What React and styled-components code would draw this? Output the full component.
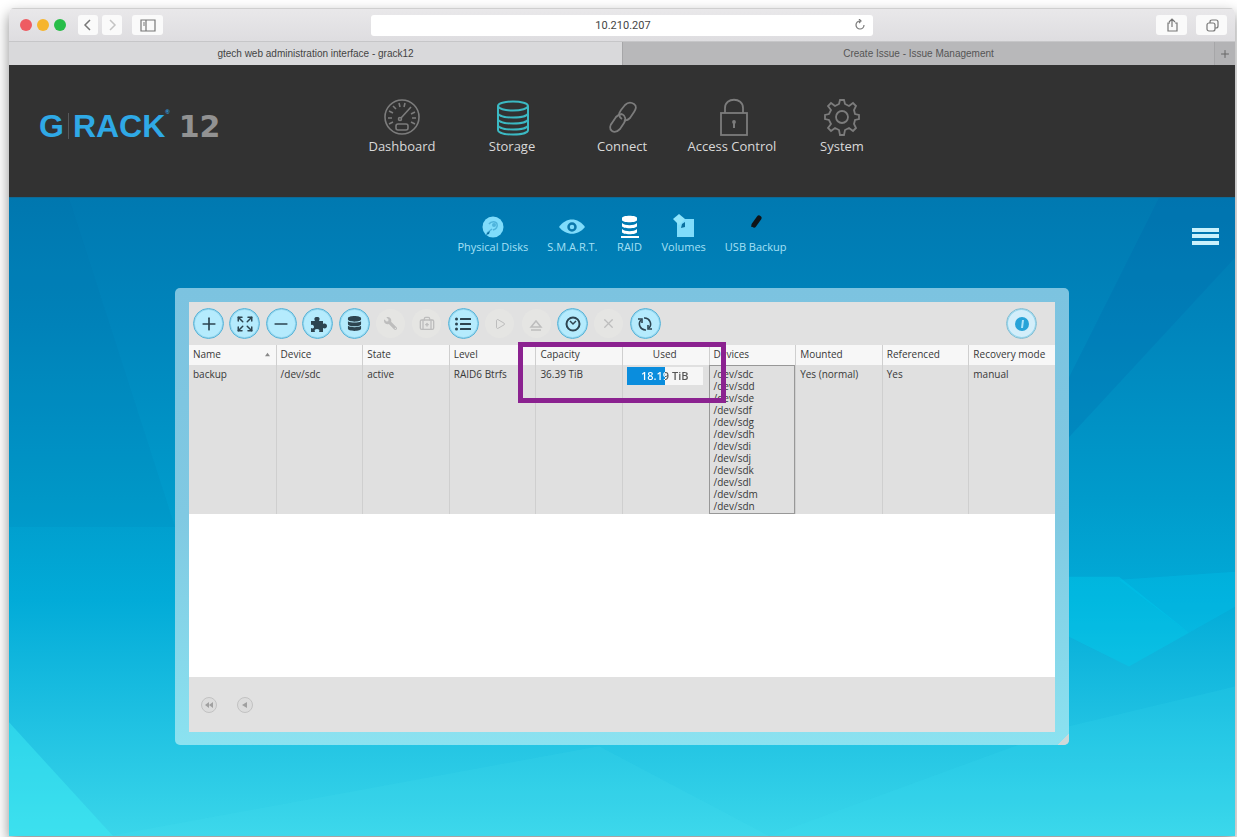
import React from 'react'
import styled, { createGlobalStyle, css } from 'styled-components'
import { Expand, BriefcaseMedical, Minus, Plus, X, Play } from 'lucide-react'
import { FaDatabase, FaWrench, FaListUl } from 'react-icons/fa'


const GlobalStyle = createGlobalStyle`
  * {
    box-sizing: border-box;
  }
  body {
    margin: 0;
    background: #fff;
    font-family: 'Open Sans', 'Noto Sans', sans-serif;
  }
  button {
    padding: 0;
    border: none;
    font: inherit;
    cursor: pointer;
  }
  a {
    text-decoration: none;
  }
`

const Page = styled.div`
  min-height: 100vh;
  display: flex;
  padding: 8px 2px 1px 9px;
  overflow: hidden;
`

const BrowserWindow = styled.div`
  flex: 1;
  display: flex;
  flex-direction: column;
  border-radius: 5px 5px 0 0;
  box-shadow: 0 6px 14px rgba(0, 0, 0, 0.45);
  overflow: hidden;
`

const BrowserBar = styled.div`
  height: 34px;
  display: grid;
  grid-template-columns: 1fr 41% 1fr;
  align-items: center;
  background: linear-gradient(#e9e8ea, #dedde0);
  border-top: 1px solid #cfcfcf;
  border-bottom: 1px solid #c6c6c8;
`

const BarGroup = styled.div`
  display: flex;
  align-items: center;
  justify-content: ${(p) => (p.$end ? 'flex-end' : 'flex-start')};
  gap: ${(p) => (p.$end ? '9px' : '4px')};
  padding: 0 8px 0 11px;
`

const Lights = styled.div`
  display: flex;
  gap: 5px;
  margin-right: 8px;
`

const Light = styled.span`
  width: 12px;
  height: 12px;
  border-radius: 50%;
  background: ${(p) => p.$color};
`

const BarButton = styled.button`
  width: ${(p) => (p.$wide ? '31px' : '20px')};
  height: 20px;
  margin-left: ${(p) => (p.$apart ? '6px' : '0')};
  display: flex;
  align-items: center;
  justify-content: center;
  border-radius: 3px;
  background: #fafafa;
  color: ${(p) => (p.$dim ? '#c4c4c4' : '#777')};
`

const AddressField = styled.div`
  height: 21px;
  display: flex;
  align-items: center;
  padding: 0 7px 0 21px;
  border-radius: 3px;
  background: #fff;
  input {
    flex: 1;
    min-width: 0;
    border: none;
    outline: none;
    background: none;
    text-align: center;
    color: #444;
    font: 11px Roboto, sans-serif;
  }
  button {
    display: flex;
    background: none;
    color: #777;
  }
`

const TabBar = styled.div`
  height: 23px;
  display: flex;
`

const Tab = styled.a`
  flex: ${(p) => (p.$active ? '0 0 50%' : '1')};
  display: flex;
  align-items: center;
  justify-content: center;
  background: ${(p) => (p.$active ? '#d9d9db' : '#b8b8ba')};
  border-left: ${(p) => (p.$active ? 'none' : '1px solid #a6a6a8')};
  color: ${(p) => (p.$active ? '#444' : '#555')};
  font: 10px 'Liberation Sans', Arial, sans-serif;
`

const NewTab = styled.button`
  width: 21px;
  background: #b3b3b5;
  border-left: 1px solid #a6a6a8;
  color: #666;
  display: flex;
  align-items: center;
  justify-content: center;
`

const Header = styled.header`
  height: 132px;
  display: grid;
  grid-template-columns: 1fr auto 1fr;
  background: #323232;
`

const Logo = styled.a`
  display: flex;
  align-items: center;
  height: 34px;
  margin: 44px 0 0 30px;
  color: #2fa9e6;
  font: bold 32px 'Liberation Sans', Arial, sans-serif;
  i {
    width: 1px;
    height: 26px;
    margin: 0 4px;
    background: #55585a;
  }
  sup {
    align-self: flex-start;
    font-size: 6px;
  }
  b {
    margin-left: 9px;
    color: #929292;
    font: bold 30px 'DejaVu Sans', sans-serif;
  }
`

const MainNav = styled.nav`
  display: flex;
  padding-top: 33px;
`

const MainLink = styled.a`
  width: 110px;
  display: flex;
  flex-direction: column;
  align-items: center;
  color: ${(p) => (p.$active ? '#3bb9c3' : '#7c7c7c')};
  span {
    color: #d9d9d9;
    font-size: 13px;
    line-height: 20px;
    white-space: nowrap;
  }
`

const Stage = styled.main`
  position: relative;
  flex: 1;
  border-top: 1px solid #0d6a97;
  background: linear-gradient(#0079b1 0%, #0085bc 20%, #009bcb 47%, #02abd8 63%, #1fc1e2 82%, #3ad6ea 100%);
`

const Facets = styled.svg`
  position: absolute;
  inset: 0;
  width: 100%;
  height: 100%;
`

const StageContent = styled.div`
  position: relative;
  padding: 15px 166px 0;
`

const SubNav = styled.nav`
  display: flex;
  justify-content: center;
  gap: 19px;
`

const SubLink = styled.a`
  display: flex;
  flex-direction: column;
  align-items: center;
  color: ${(p) => (p.$active ? '#fff' : '#7fdcfb')};
  span {
    color: #a5e0f5;
    font-size: 11px;
    line-height: 16px;
  }
`

const MenuButton = styled.button`
  position: absolute;
  top: 30px;
  right: 16px;
  display: flex;
  background: none;
`

const Panel = styled.section`
  position: relative;
  margin-top: 33px;
  padding: 14px 14px 13px;
  border-radius: 5px;
  background: linear-gradient(#7cc3e0, #80c9e2 50%, #8be2f0);
  overflow: hidden;
`

const ResizeCorner = styled.div`
  position: absolute;
  right: 0;
  bottom: 0;
  width: 12px;
  height: 12px;
  background: linear-gradient(135deg, transparent 50%, #cfd8d8 50%);
`

const Toolbar = styled.div`
  height: 43px;
  display: flex;
  align-items: center;
  justify-content: space-between;
  padding: 0 18px 0 4px;
  background: #e1e1e1;
`

const ToolGroup = styled.div`
  width: 468px;
  display: flex;
  justify-content: space-between;
`

const ToolButton = styled.button`
  width: 31px;
  height: 31px;
  display: flex;
  align-items: center;
  justify-content: center;
  border: 1px solid #58b2d6;
  border-radius: 50%;
  background: #b5ebfd;
  box-shadow: inset 0 0 0 1px #94d6ee;
  color: #2d4450;
  ${(p) => p.$pale && css`
    background: #d3eefa;
    border-color: #86bdd0;
  `}
  &:disabled {
    border-color: transparent;
    background: #e5e5e3;
    background-clip: content-box;
    box-shadow: none;
    color: #bdbdbd;
    cursor: default;
  }
`

const GridBody = styled.div`
  position: relative;
  min-height: 332px;
  background: #fff;
`

const Table = styled.table`
  width: 100%;
  table-layout: fixed;
  border-collapse: separate;
  border-spacing: 0;
  color: #383838;
  font-size: 10px;
  line-height: 12px;
  th, td {
    padding: 3px 0 2px 4px;
    border-left: 1px solid #cfcfcf;
    font-weight: 400;
    text-align: left;
    vertical-align: top;
    white-space: nowrap;
  }
  th:first-child, td:first-child {
    border-left: none;
  }
  th {
    height: 20px;
    background: #f7f7f7;
  }
  td {
    background: #e0e0e0;
  }
`

const HeadLabel = styled.div`
  display: flex;
  align-items: center;
  justify-content: ${(p) => (p.$center ? 'center' : 'space-between')};
  padding-right: 6px;
`

const DeviceCell = styled.td`
  && {
    border: 1px solid #989898;
    padding: 2px 0 1px 4px;
  }
  ul {
    margin: 0;
    padding: 0;
    list-style: none;
  }
`

const UsageCell = styled.td`
  && {
    padding: 2px 6px 0 4px;
  }
`

const UsageBar = styled.div`
  height: 18px;
  background: linear-gradient(90deg, #0a8ddd var(--used), #f6f6f6 var(--used));
  span {
    display: block;
    background: linear-gradient(90deg, #fff var(--used), #555 var(--used));
    background-clip: text;
    color: transparent;
    font-size: 11px;
    font-weight: 600;
    line-height: 18px;
    text-align: center;
  }
`

const Highlight = styled.div`
  position: absolute;
  top: -3px;
  left: 38%;
  width: 24%;
  height: 61px;
  border: 5px solid #8b2290;
  pointer-events: none;
`

const Pager = styled.footer`
  height: 55px;
  display: flex;
  align-items: center;
  gap: 20px;
  padding: 0 0 0 12px;
  background: #e1e1e1;
`

const PageButton = styled.button`
  width: 16px;
  height: 16px;
  display: flex;
  align-items: center;
  justify-content: center;
  border-radius: 50%;
  border: 1px solid #c2c2c2;
  background: #dcdcdc;
  color: #a0a0a0;
`

const Icon = ({ size = 38, box = 38, width = 2, children }) => (
  <svg width={size} height={size} viewBox={`0 0 ${box} ${box}`} fill="none" stroke="currentColor" strokeWidth={width} aria-hidden="true">
    {children}
  </svg>
)

const GaugeIcon = () => (
  <Icon width={1.6}>
    <circle cx="19" cy="19" r="17" />
    <path d="M5 20h4M6 13l4 2M10 8l3 3M16 5l1 4M22 5l-1 4M29 20h4M32 14l-4 2M6 26l4-2M32 26l-4-2" />
    <path d="M28 9L18 20" />
    <circle cx="17" cy="21" r="1.500" />
    <rect x="13" y="26" width="12" height="6" rx="2" />
  </Icon>
)

const StackIcon = () => (
  <Icon width={2}>
    <ellipse cx="20" cy="8" rx="15" ry="4.500" />
    <path d="M5 8v24c0 6 30 6 30 0V8M5 15c0 6 30 6 30 0M5 21c0 6 30 6 30 0M5 27c0 6 30 6 30 0" />
  </Icon>
)

const LinkIcon = () => (
  <Icon width={1.8}>
    <path d="M19 21c-3-2-4-5-1-9l4-5c3-3 6-3 9-1s2 5 0 8l-4 6c-2 2-4 3-6 2" />
    <path d="M19 16c4 2 4 6 2 9l-4 6c-3 3-5 4-8 2s-2-6 0-8l4-6c2-2 4-3 6-3" />
  </Icon>
)

const LockIcon = () => (
  <Icon width={1.8}>
    <rect x="8" y="15" width="26" height="22" />
    <path d="M12 15V10c0-11 18-11 18 0v5" />
    <path d="M21 23v7" strokeWidth="2" />
    <circle cx="21" cy="24" r="1" />
  </Icon>
)

const GearIcon = () => (
  <Icon width={1.8}>
    <circle cx="19" cy="19" r="6" />
    <path d="M16 6l1-4h4l1 4 4 2 4-3 3 3-2 4 1 4 4 1v4l-4 1-1 4 2 4-3 3-4-3-4 2-1 5h-4l-1-5-4-2-4 3-3-3 3-4-2-4-4-1v-4l4-1 2-4-3-4 3-3 4 3z" />
  </Icon>
)

const DiskIcon = () => (
  <Icon size={26} box={26}>
    <circle cx="13" cy="14" r="10.500" fill="currentColor" stroke="none" />
    <path d="M7 20l5-4M9 11c2-3 7-3 8 0s-1 5-4 6" stroke="#4fb4dc" strokeWidth="1.500" />
    <circle cx="14" cy="12" r="2" fill="#4fb4dc" stroke="none" />
    <path d="M6 22l3-1 1-3-3 2z" fill="#0a6fa0" stroke="none" />
  </Icon>
)

const EyeIcon = () => (
  <Icon size={26} box={26}>
    <path d="M0 14C7 4 19 4 26 14C19 23 7 23 0 14z" fill="currentColor" stroke="none" />
    <circle cx="13" cy="14" r="3.500" stroke="#0b78ab" strokeWidth="2.500" />
  </Icon>
)

const RaidIcon = () => (
  <Icon size={26} box={26}>
    <g fill="currentColor" stroke="none">
      <path d="M5 5c0-3 15-3 15 0v2c0 3-15 3-15 0z" />
      <path d="M5 10c3 3 12 3 15 0v3c0 3-15 3-15 0z" />
      <path d="M5 16c3 3 12 3 15 0v3c0 3-15 3-15 0z" />
      <rect x="4" y="23" width="18" height="2" />
    </g>
  </Icon>
)

const VolumesIcon = () => (
  <Icon size={26} box={26}>
    <rect x="6" y="6" width="17" height="18" fill="currentColor" stroke="none" />
    <path d="M8 1l6 5-6 6-6-6z" fill="#8fe4fb" stroke="none" />
    <path d="M14 9v5l-4 1 1-4z" fill="#0b6f9f" stroke="none" />
  </Icon>
)

const UsbIcon = () => (
  <Icon size={26} box={26}>
    <path d="M11 12l5-7" stroke="#101418" strokeWidth="5" strokeLinecap="round" />
    <path d="M8 14l2-4 3 3z" fill="#101418" stroke="none" />
  </Icon>
)

const PuzzleIcon = () => (
  <Icon size={18} box={18}>
    <path
      d="M2 6h4c-1-2-1-4 2-4s3 2 2 4h4v3c2-1 4 0 4 2s-2 3-4 2v4h-4c1-2 0-3-2-3s-3 1-2 3H2v-4c2 1 3 0 3-1s-1-3-3-2z"
      fill="currentColor"
      stroke="none"
    />
  </Icon>
)

const EjectIcon = () => (
  <Icon size={16} box={16}>
    <path d="M3 11l5-6 5 6zM3 14h10" strokeWidth="1.500" />
  </Icon>
)

const ClockIcon = () => (
  <Icon size={18} box={18}>
    <circle cx="9" cy="9" r="6.500" strokeWidth="2" />
    <path d="M6 6l3 3 3-3" strokeWidth="1.500" />
  </Icon>
)

const RefreshIcon = () => (
  <Icon size={18} box={18} width={1.6}>
    <path d="M5 5a6 6 0 0 0 5 10M13 13a6 6 0 0 0-5-10" />
    <path d="M2 4h4v4M16 14h-4v-4" />
  </Icon>
)

const InfoIcon = () => (
  <Icon size={18} box={18}>
    <circle cx="9" cy="9" r="7" fill="#27a3d8" stroke="none" />
    <path d="M10 5l-1 8" stroke="#a9e3fa" />
  </Icon>
)

const mainLinks = [
  { label: 'Dashboard', icon: <GaugeIcon /> },
  { label: 'Storage', icon: <StackIcon />, active: true },
  { label: 'Connect', icon: <LinkIcon /> },
  { label: 'Access Control', icon: <LockIcon /> },
  { label: 'System', icon: <GearIcon /> },
]

const subLinks = [
  { label: 'Physical Disks', icon: <DiskIcon /> },
  { label: 'S.M.A.R.T.', icon: <EyeIcon /> },
  { label: 'RAID', icon: <RaidIcon />, active: true },
  { label: 'Volumes', icon: <VolumesIcon /> },
  { label: 'USB Backup', icon: <UsbIcon /> },
]

const tools = [
  { name: 'Create', icon: <Plus size={20} /> },
  { name: 'Grow', icon: <Expand size={18} /> },
  { name: 'Remove', icon: <Minus size={20} /> },
  { name: 'Recover', icon: <PuzzleIcon /> },
  { name: 'File system', icon: <FaDatabase size={15} /> },
  { name: 'Repair', icon: <FaWrench size={13} style={{ transform: 'scaleX(-1)' }} />, disabled: true },
  { name: 'Rescue', icon: <BriefcaseMedical size={16} />, disabled: true },
  { name: 'Details', icon: <FaListUl size={16} /> },
  { name: 'Mount', icon: <Play size={12} />, disabled: true },
  { name: 'Unmount', icon: <EjectIcon />, disabled: true },
  { name: 'Scrub', icon: <ClockIcon /> },
  { name: 'Cancel', icon: <X size={15} />, disabled: true },
  { name: 'Refresh', icon: <RefreshIcon /> },
]

const columns = ['Name', 'Device', 'State', 'Level', 'Capacity', 'Used', 'Devices', 'Mounted', 'Referenced', 'Recovery mode']

const arrays = [
  {
    name: 'backup',
    device: '/dev/sdc',
    state: 'active',
    level: 'RAID6 Btrfs',
    capacity: '36.39 TiB',
    used: '18.19 TiB',
    percent: 50,
    devices: ['c', 'd', 'e', 'f', 'g', 'h', 'i', 'j', 'k', 'l', 'm', 'n'].map((d) => '/dev/sd' + d),
    mounted: 'Yes (normal)',
    referenced: 'Yes',
    recovery: 'manual',
  },
]

const Browser = () => (
  <>
    <BrowserBar>
      <BarGroup>
        <Lights>
          <Light $color="#ee5c62" />
          <Light $color="#f6b52e" />
          <Light $color="#27bd48" />
        </Lights>
        <BarButton aria-label="Back">
          <Icon size={12} box={12} width={1.5}><path d="M8 1L3 6l5 5" /></Icon>
        </BarButton>
        <BarButton $dim aria-label="Forward">
          <Icon size={12} box={12} width={1.5}><path d="M4 1l5 5-5 5" /></Icon>
        </BarButton>
        <BarButton $wide $apart aria-label="Sidebar">
          <Icon size={16} box={16} width={1.2}><path d="M1 3h14v11H1zM6 3v11M3 6h2M3 8h2" /></Icon>
        </BarButton>
      </BarGroup>
      <AddressField>
        <input type="text" aria-label="Address" defaultValue="10.210.207" />
        <button aria-label="Reload">
          <Icon size={12} box={12} width={1.2}><path d="M10 6a4 4 0 1 1-4-4M5 0l2 2-2 2" /></Icon>
        </button>
      </AddressField>
      <BarGroup $end>
        <BarButton $wide aria-label="Share">
          <Icon size={16} box={16} width={1.2}><path d="M6 6H4v8h9V6h-2M8 10V2M5 5l3-3 3 3" /></Icon>
        </BarButton>
        <BarButton $wide aria-label="Show tabs">
          <Icon size={16} box={16} width={1.2}>
            <rect x="3" y="6" width="8" height="8" rx="2" />
            <path d="M6 6V5q0-2 2-2h4q2 0 2 2v4q0 2-2 2h-1" />
          </Icon>
        </BarButton>
      </BarGroup>
    </BrowserBar>
    <TabBar>
      <Tab href="#grack" $active>gtech web administration interface - grack12</Tab>
      <Tab href="#issue">Create Issue - Issue Management</Tab>
      <NewTab aria-label="New tab"><Plus size={12} /></NewTab>
    </TabBar>
  </>
)

const Background = () => (
  <Facets viewBox="0 0 1226 640" preserveAspectRatio="none" aria-hidden="true">
    <polygon points="0,0 60,0 166,330 0,330" fill="#005f9f" opacity="0.07" />
    <polygon points="1226,0 1150,0 1060,180 1060,240 1226,60" fill="#0060a5" opacity="0.18" />
    <polygon points="1060,380 1110,380 1180,436 1120,470 1060,440" fill="#00d2f2" opacity="0.35" />
    <polygon points="1110,383 1226,375 1226,410 1180,436" fill="#00c8f0" opacity="0.3" />
    <polygon points="0,526 104,640 0,640" fill="#40eef5" opacity="0.45" />
    <polygon points="100,640 590,550 760,640" fill="#5cf0fa" opacity="0.1" />
    <polygon points="760,640 1060,530 1226,490 1226,640" fill="#42e6f5" opacity="0.12" />
  </Facets>
)

const RaidTable = () => (
  <Table>
    <thead>
      <tr>
        {columns.map((c) => (
          <th key={c} scope="col">
            <HeadLabel $center={c === 'Used'}>
              {c}
              {c === 'Name' && <Icon size={5} box={6}><path d="M0 5l3-4 3 4z" fill="#888" stroke="none" /></Icon>}
            </HeadLabel>
          </th>
        ))}
      </tr>
    </thead>
    <tbody>
      {arrays.map((a) => (
        <tr key={a.name}>
          <td>{a.name}</td>
          <td>{a.device}</td>
          <td>{a.state}</td>
          <td>{a.level}</td>
          <td>{a.capacity}</td>
          <UsageCell>
            <UsageBar style={{ '--used': a.percent + '%' }}>
              <span>{a.used}</span>
            </UsageBar>
          </UsageCell>
          <DeviceCell>
            <ul>
              {a.devices.map((d) => <li key={d}>{d}</li>)}
            </ul>
          </DeviceCell>
          <td>{a.mounted}</td>
          <td>{a.referenced}</td>
          <td>{a.recovery}</td>
        </tr>
      ))}
    </tbody>
  </Table>
)

const App = () => {
  return (
    <Page>
      <GlobalStyle />
      <BrowserWindow>
        <Browser />
        <Header>
          <Logo href="#home">G<i />RACK<sup>®</sup><b>12</b></Logo>
          <MainNav>
            {mainLinks.map((l) => (
              <MainLink key={l.label} href="#main" $active={l.active}>
                {l.icon}
                <span>{l.label}</span>
              </MainLink>
            ))}
          </MainNav>
        </Header>
        <Stage>
          <Background />
          <StageContent>
            <SubNav>
              {subLinks.map((l) => (
                <SubLink key={l.label} href="#sub" $active={l.active}>
                  {l.icon}
                  <span>{l.label}</span>
                </SubLink>
              ))}
            </SubNav>
            <MenuButton aria-label="Menu">
              <svg width="27" height="17" viewBox="0 0 27 17" fill="#c9f1fc">
                <rect width="27" height="4" />
                <rect y="6" width="27" height="4" />
                <rect y="13" width="27" height="4" />
              </svg>
            </MenuButton>
            <Panel>
              <Toolbar>
                <ToolGroup>
                  {tools.map((t) => (
                    <ToolButton key={t.name} aria-label={t.name} disabled={t.disabled}>{t.icon}</ToolButton>
                  ))}
                </ToolGroup>
                <ToolButton $pale aria-label="Info"><InfoIcon /></ToolButton>
              </Toolbar>
              <GridBody>
                <RaidTable />
                <Highlight />
              </GridBody>
              <Pager>
                <PageButton aria-label="First page">
                  <svg width="8" height="8" viewBox="0 0 8 8" fill="currentColor"><path d="M4 1v6L0 4zM8 1v6L4 4z" /></svg>
                </PageButton>
                <PageButton aria-label="Previous page">
                  <svg width="8" height="8" viewBox="0 0 8 8" fill="currentColor"><path d="M6 1v6L1 4z" /></svg>
                </PageButton>
              </Pager>
              <ResizeCorner />
            </Panel>
          </StageContent>
        </Stage>
      </BrowserWindow>
    </Page>
  )
}

export default App
